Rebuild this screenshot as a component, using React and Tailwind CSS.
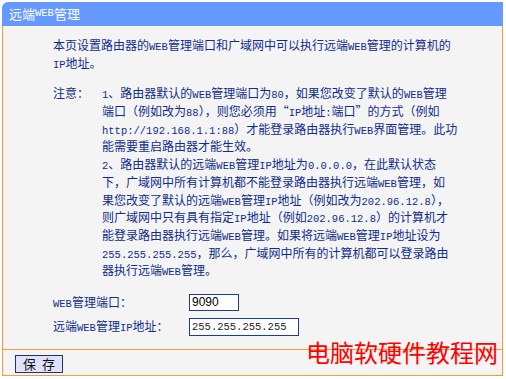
import React from "react";

const T = ({ children }) => (
  <span className="font-['Liberation_Mono',monospace] text-[10.5px]">{children}</span>
);

const L = ({ children }) => <div className="h-[17.7px] leading-[17.7px] whitespace-nowrap">{children}</div>;

export default function App() {
  return (
    <div className="w-[506px] h-[379px] bg-white pt-[2px] pl-[2px] relative font-['Noto_Sans_CJK_SC',sans-serif] text-[12px] text-[#102c8c]">
      <div className="w-[501px]">
        <div className="h-[24px] bg-[#6699ff] rounded-tl-[6px] text-white text-[13px] pl-[7px] flex items-center">
          远端<T>WEB</T>管理
        </div>
        <div className="border-x border-b border-[#ff9933] bg-[#f4f4f4]">
          <div className="h-[323px] pl-[50px] pt-[10px]">
            <L>本页设置路由器的<T>WEB</T>管理端口和广域网中可以执行远端<T>WEB</T>管理的计算机的</L>
            <L><T>IP</T>地址。</L>
            <div className="flex mt-[13px]">
              <div className="w-[49px] leading-[17.7px]">注意：</div>
              <div>
                <L><T>1</T>、路由器默认的<T>WEB</T>管理端口为<T>80</T>，如果您改变了默认的<T>WEB</T>管理</L>
                <L>端口（例如改为<T>88</T>），则您必须用“<T>IP</T>地址<T>:</T>端口”的方式（例如</L>
                <L><T>http://192.168.1.1:88</T>）才能登录路由器执行<T>WEB</T>界面管理。此功</L>
                <L>能需要重启路由器才能生效。</L>
                <L><T>2</T>、路由器默认的远端<T>WEB</T>管理<T>IP</T>地址为<T>0.0.0.0</T>，在此默认状态</L>
                <L>下，广域网中所有计算机都不能登录路由器执行远端<T>WEB</T>管理，如</L>
                <L>果您改变了默认的远端<T>WEB</T>管理<T>IP</T>地址（例如改为<T>202.96.12.8</T>），</L>
                <L>则广域网中只有具有指定<T>IP</T>地址（例如<T>202.96.12.8</T>）的计算机才</L>
                <L>能登录路由器执行远端<T>WEB</T>管理。如果将远端<T>WEB</T>管理<T>IP</T>地址设为</L>
                <L><T>255.255.255.255</T>，那么，广域网中所有的计算机都可以登录路由</L>
                <L>器执行远端<T>WEB</T>管理。</L>
              </div>
            </div>
            <div className="flex items-center h-[18px] mt-[15px]">
              <div className="w-[136px] whitespace-nowrap"><T>WEB</T>管理端口：</div>
              <div className="w-[50px] h-[17px] border border-[#1d3a9e] bg-white text-black font-['Liberation_Sans',sans-serif] text-[12px] leading-[15px] pl-[2px]">9090</div>
            </div>
            <div className="flex items-center h-[18px] mt-[6px]">
              <div className="w-[136px] whitespace-nowrap">远端<T>WEB</T>管理<T>IP</T>地址：</div>
              <div className="w-[110px] h-[18px] border border-[#1d3a9e] bg-white text-[#222] font-['Liberation_Mono',monospace] text-[10.5px] leading-[16px] pl-[2px]">255.255.255.255</div>
            </div>
          </div>
          <div className="border-t border-[#ff9933] h-[26px] pl-[12px] pt-[5px]">
            <button className="w-[48px] h-[18px] bg-[#dfe2fb] border border-[#23306b] text-[#111] text-[13px] leading-[16px] flex items-center justify-center gap-[6px]">
              <span>保</span><span>存</span>
            </button>
          </div>
        </div>
      </div>
      <div className="absolute left-[306px] top-[340px] text-[24px] leading-[24px] text-[#ff0000] whitespace-nowrap">
        电脑软硬件教程网
      </div>
    </div>
  );
}
